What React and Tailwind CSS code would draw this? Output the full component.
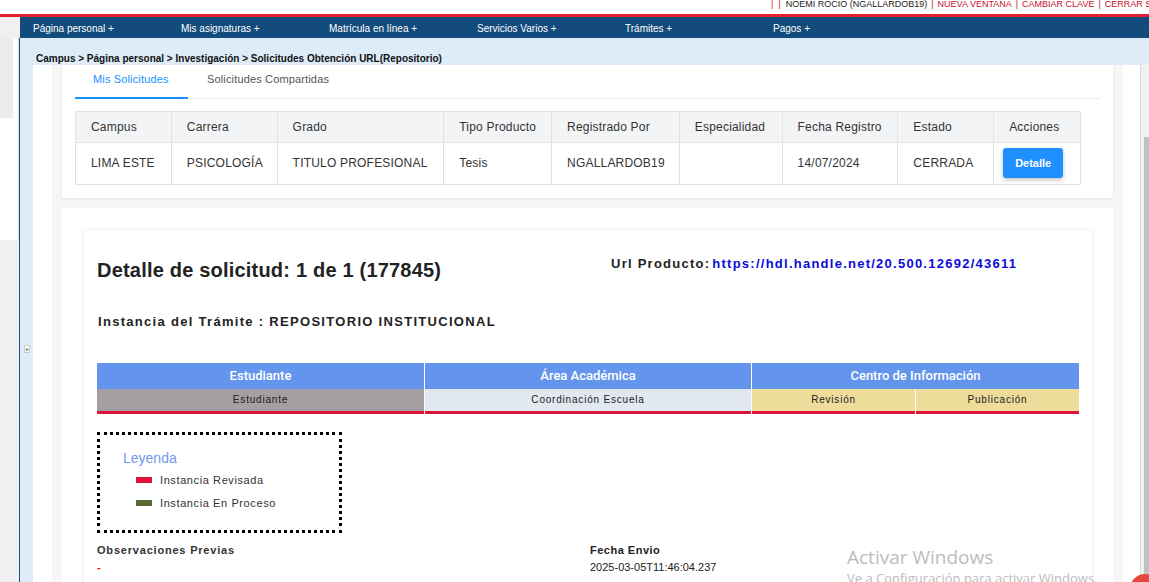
const navItems = [
  "Página personal +",
  "Mis asignaturas +",
  "Matrícula en línea +",
  "Servicios Varios +",
  "Trámites +",
  "Pagos +",
];

const cols = [
  { label: "Campus", w: "w-[95px]", value: "LIMA ESTE" },
  { label: "Carrera", w: "w-[106px]", value: "PSICOLOGÍA" },
  { label: "Grado", w: "w-[167px]", value: "TITULO PROFESIONAL" },
  { label: "Tipo Producto", w: "w-[108px]", value: "Tesis" },
  { label: "Registrado Por", w: "w-[128px]", value: "NGALLARDOB19" },
  { label: "Especialidad", w: "w-[103px]", value: "" },
  { label: "Fecha Registro", w: "w-[116px]", value: "14/07/2024" },
  { label: "Estado", w: "w-[96px]", value: "CERRADA" },
  { label: "Acciones", w: "w-[87px]", value: null },
];

function TopBar() {
  return (
    <div className="flex h-[14px] items-start bg-white pl-[771px] text-[9px] leading-[9px] whitespace-nowrap overflow-hidden">
      <span className="text-[#c8102e]">|&nbsp;&nbsp;|</span>
      <span className="ml-[5px] text-[#222]">NOEMI ROCIO (NGALLARDOB19)</span>
      <span className="mx-[4px] text-[#c8102e]">|</span>
      <span className="text-[#c8102e]">NUEVA VENTANA</span>
      <span className="mx-[4px] text-[#c8102e]">|</span>
      <span className="text-[#c8102e]">CAMBIAR CLAVE</span>
      <span className="mx-[4px] text-[#c8102e]">|</span>
      <span className="text-[#c8102e]">CERRAR SESIÓN</span>
    </div>
  );
}

function NavBar() {
  return (
    <div className="flex h-[21px]">
      <div className="w-[20px] bg-[#f0f0f0]" />
      <div className="flex flex-1 items-start bg-[#134b7c] pl-[13px] pt-[6px]">
        {navItems.map((item) => (
          <div key={item} className="w-[148px] text-[10px] leading-[12px] text-white">
            {item}
          </div>
        ))}
      </div>
    </div>
  );
}

function RequestsCard() {
  return (
    <div className="bg-white px-[13px] pb-[13px] shadow-[0_1px_2px_rgba(0,0,0,0.08)]">
      <div className="flex border-b border-[#ececec] text-[11px] tracking-[0.15px]">
        <div className="-mb-px w-[113px] border-b-2 border-[#1890ff] pb-[9px] pl-[18px] pt-[6px] text-[#1890ff]">
          Mis Solicitudes
        </div>
        <div className="pl-[19px] pt-[6px] text-[#555]">Solicitudes Compartidas</div>
      </div>
      <div className="mt-[12px] w-[1006px] border border-[#e3e3e3] text-[12px] tracking-[0.2px] text-[#333]">
        <div className="flex h-[30px] bg-[#f3f4f6]">
          {cols.map((c, i) => (
            <div
              key={c.label}
              className={`${c.w} flex items-center pl-[15px] ${i > 0 ? "border-l border-[#e3e3e3]" : ""}`}
            >
              {c.label}
            </div>
          ))}
        </div>
        <div className="flex h-[42px] border-t border-[#e3e3e3]">
          {cols.map((c, i) => (
            <div
              key={c.label}
              className={`${c.w} flex items-center ${c.value === null ? "pl-[9px]" : "pl-[15px]"} ${i > 0 ? "border-l border-[#e3e3e3]" : ""}`}
            >
              {c.value === null ? (
                <button
                  type="button"
                  className="h-[30px] w-[60px] rounded-[3px] bg-[#1e90ff] text-[11px] font-bold tracking-normal text-white shadow-[0_2px_4px_rgba(0,0,0,0.25)]"
                >
                  Detalle
                </button>
              ) : (
                c.value
              )}
            </div>
          ))}
        </div>
      </div>
    </div>
  );
}

function FlowTable() {
  return (
    <div className="flex w-[982px] gap-px">
      <div className="flex w-[327px] flex-col">
        <div className="flex h-[26px] items-center justify-center bg-[#6495ed] font-['Roboto'] text-[13px] font-medium text-white">
          Estudiante
        </div>
        <div className="flex h-[22px] items-center justify-center bg-[#a39fa3] text-[10px] tracking-[0.8px] text-[#222]">
          Estudiante
        </div>
        <div className="h-[3px] bg-[#dc143c]" />
      </div>
      <div className="flex w-[326px] flex-col">
        <div className="flex h-[26px] items-center justify-center bg-[#6495ed] font-['Roboto'] text-[13px] font-medium text-white">
          Área Académica
        </div>
        <div className="flex h-[22px] items-center justify-center bg-[#e1e8ef] text-[10px] tracking-[0.8px] text-[#222]">
          Coordinación Escuela
        </div>
        <div className="h-[3px] bg-[#dc143c]" />
      </div>
      <div className="flex w-[327px] flex-col">
        <div className="flex h-[26px] items-center justify-center bg-[#6495ed] font-['Roboto'] text-[13px] font-medium text-white">
          Centro de Información
        </div>
        <div className="flex gap-px">
          {["Revisión", "Publicación"].map((s) => (
            <div key={s} className="flex w-[163px] flex-col">
              <div className="flex h-[22px] items-center justify-center bg-[#eedc9a] text-[10px] tracking-[0.8px] text-[#222]">
                {s}
              </div>
              <div className="h-[3px] bg-[#dc143c]" />
            </div>
          ))}
        </div>
      </div>
    </div>
  );
}

function DetailCard() {
  return (
    <div className="mt-[10px] bg-white pl-[22px] pr-[21px] pt-[22px]">
      <div className="bg-white pl-[13px] shadow-[0_0_4px_rgba(0,0,0,0.1)]">
        <div className="flex items-start pt-[29px]">
          <div className="w-[514px] text-[20px] font-bold leading-[22px] tracking-[0.2px] text-[#222]">
            Detalle de solicitud: 1 de 1 (177845)
          </div>
          <div className="-mt-[3px] text-[13px] font-bold leading-[16px] tracking-[1.25px] text-[#222]">
            Url Producto:
            <span className="ml-[2px] text-[#0b0bd9]">https://hdl.handle.net/20.500.12692/43611</span>
          </div>
        </div>
        <div className="mt-[33px] pl-px text-[13px] font-bold leading-[16px] tracking-[1.3px] text-[#222]">
          Instancia del Trámite : REPOSITORIO INSTITUCIONAL
        </div>
        <div className="mt-[33px]">
          <FlowTable />
        </div>
        <div className="mt-[18px] h-[101px] w-[245px] border-[3px] border-dotted border-black pl-[23px] pt-[15px]">
          <div className="text-[14px] leading-[16px] text-[#6d9ae8]">Leyenda</div>
          <div className="mt-[7px] flex items-center pl-[13px] text-[11px] leading-[14px] tracking-[0.6px] text-[#333]">
            <span className="mr-[8px] h-[6px] w-[16px] bg-[#dc143c]" />
            Instancia Revisada
          </div>
          <div className="mt-[9px] flex items-center pl-[13px] text-[11px] leading-[14px] tracking-[0.6px] text-[#333]">
            <span className="mr-[8px] h-[6px] w-[16px] bg-[#556b2f]" />
            Instancia En Proceso
          </div>
        </div>
        <div className="mt-[10px] flex pb-[20px]">
          <div className="w-[493px]">
            <div className="text-[11px] font-bold leading-[14px] tracking-[0.8px] text-[#333]">
              Observaciones Previas
            </div>
            <div className="mt-[3px] text-[11px] font-bold leading-[14px] text-[#ff0000]">-</div>
          </div>
          <div>
            <div className="text-[11px] font-bold leading-[14px] tracking-[0.5px] text-[#222]">Fecha Envio</div>
            <div className="mt-[3px] text-[11px] leading-[14px] text-[#222]">2025-03-05T11:46:04.237</div>
          </div>
        </div>
      </div>
    </div>
  );
}

export default function App() {
  return (
    <div className="relative h-[582px] w-[1149px] overflow-hidden bg-white font-['Liberation_Sans',Arial,sans-serif]">
      <TopBar />
      <div className="h-[3px] bg-[#e4202e]" />
      <NavBar />
      <div className="flex h-[544px]">
        <div className="flex w-[19px] flex-col">
          <div className="flex h-[202px] border-r border-[#d9d9d9] bg-white">
            <div className="h-[80px] w-[13px] bg-[#ececec]" />
          </div>
          <div className="flex-1 bg-[#f0f0f0]" />
        </div>
        <div className="relative flex flex-1 flex-col border-l border-[#1f4f8a] bg-[#deebf8]">
          <div className="h-[30px] pl-[16px] pt-[15px] text-[10px] font-bold leading-[12px] text-[#111]">
            Campus &gt; Página personal &gt; Investigación &gt; Solicitudes Obtención URL(Repositorio)
          </div>
          <div className="flex flex-1 pl-[13px]">
            <div className="flex flex-1 border-r border-[#dcdcdc] bg-white pl-[19px] pr-[17px]">
              <div className="flex-1 bg-[#f6f6f6] px-[10px]">
                <RequestsCard />
                <DetailCard />
              </div>
            </div>
            <div className="w-[8px] bg-[#f1f1f1] pt-[72px]">
              <div className="ml-[3px] h-full w-[5px] bg-[#c1c1c1]" />
            </div>
          </div>
          <span className="absolute left-[4px] top-[307px] flex h-[8px] w-[6px] items-center justify-center border border-[#c9c9c9] bg-white text-[6px] leading-none text-[#777]">
            ▸
          </span>
        </div>
      </div>
      <div className="pointer-events-none absolute left-[847px] top-[545px] font-['Open_Sans',sans-serif] text-[#bcbcbc]">
        <div className="text-[19px] leading-[24px]">Activar Windows</div>
        <div className="text-[13px] leading-[18px]">Ve a Configuración para activar Windows.</div>
      </div>
      <div className="absolute left-[1130px] top-[574px] h-[30px] w-[30px] rounded-full bg-[#e8453c]" />
    </div>
  );
}
